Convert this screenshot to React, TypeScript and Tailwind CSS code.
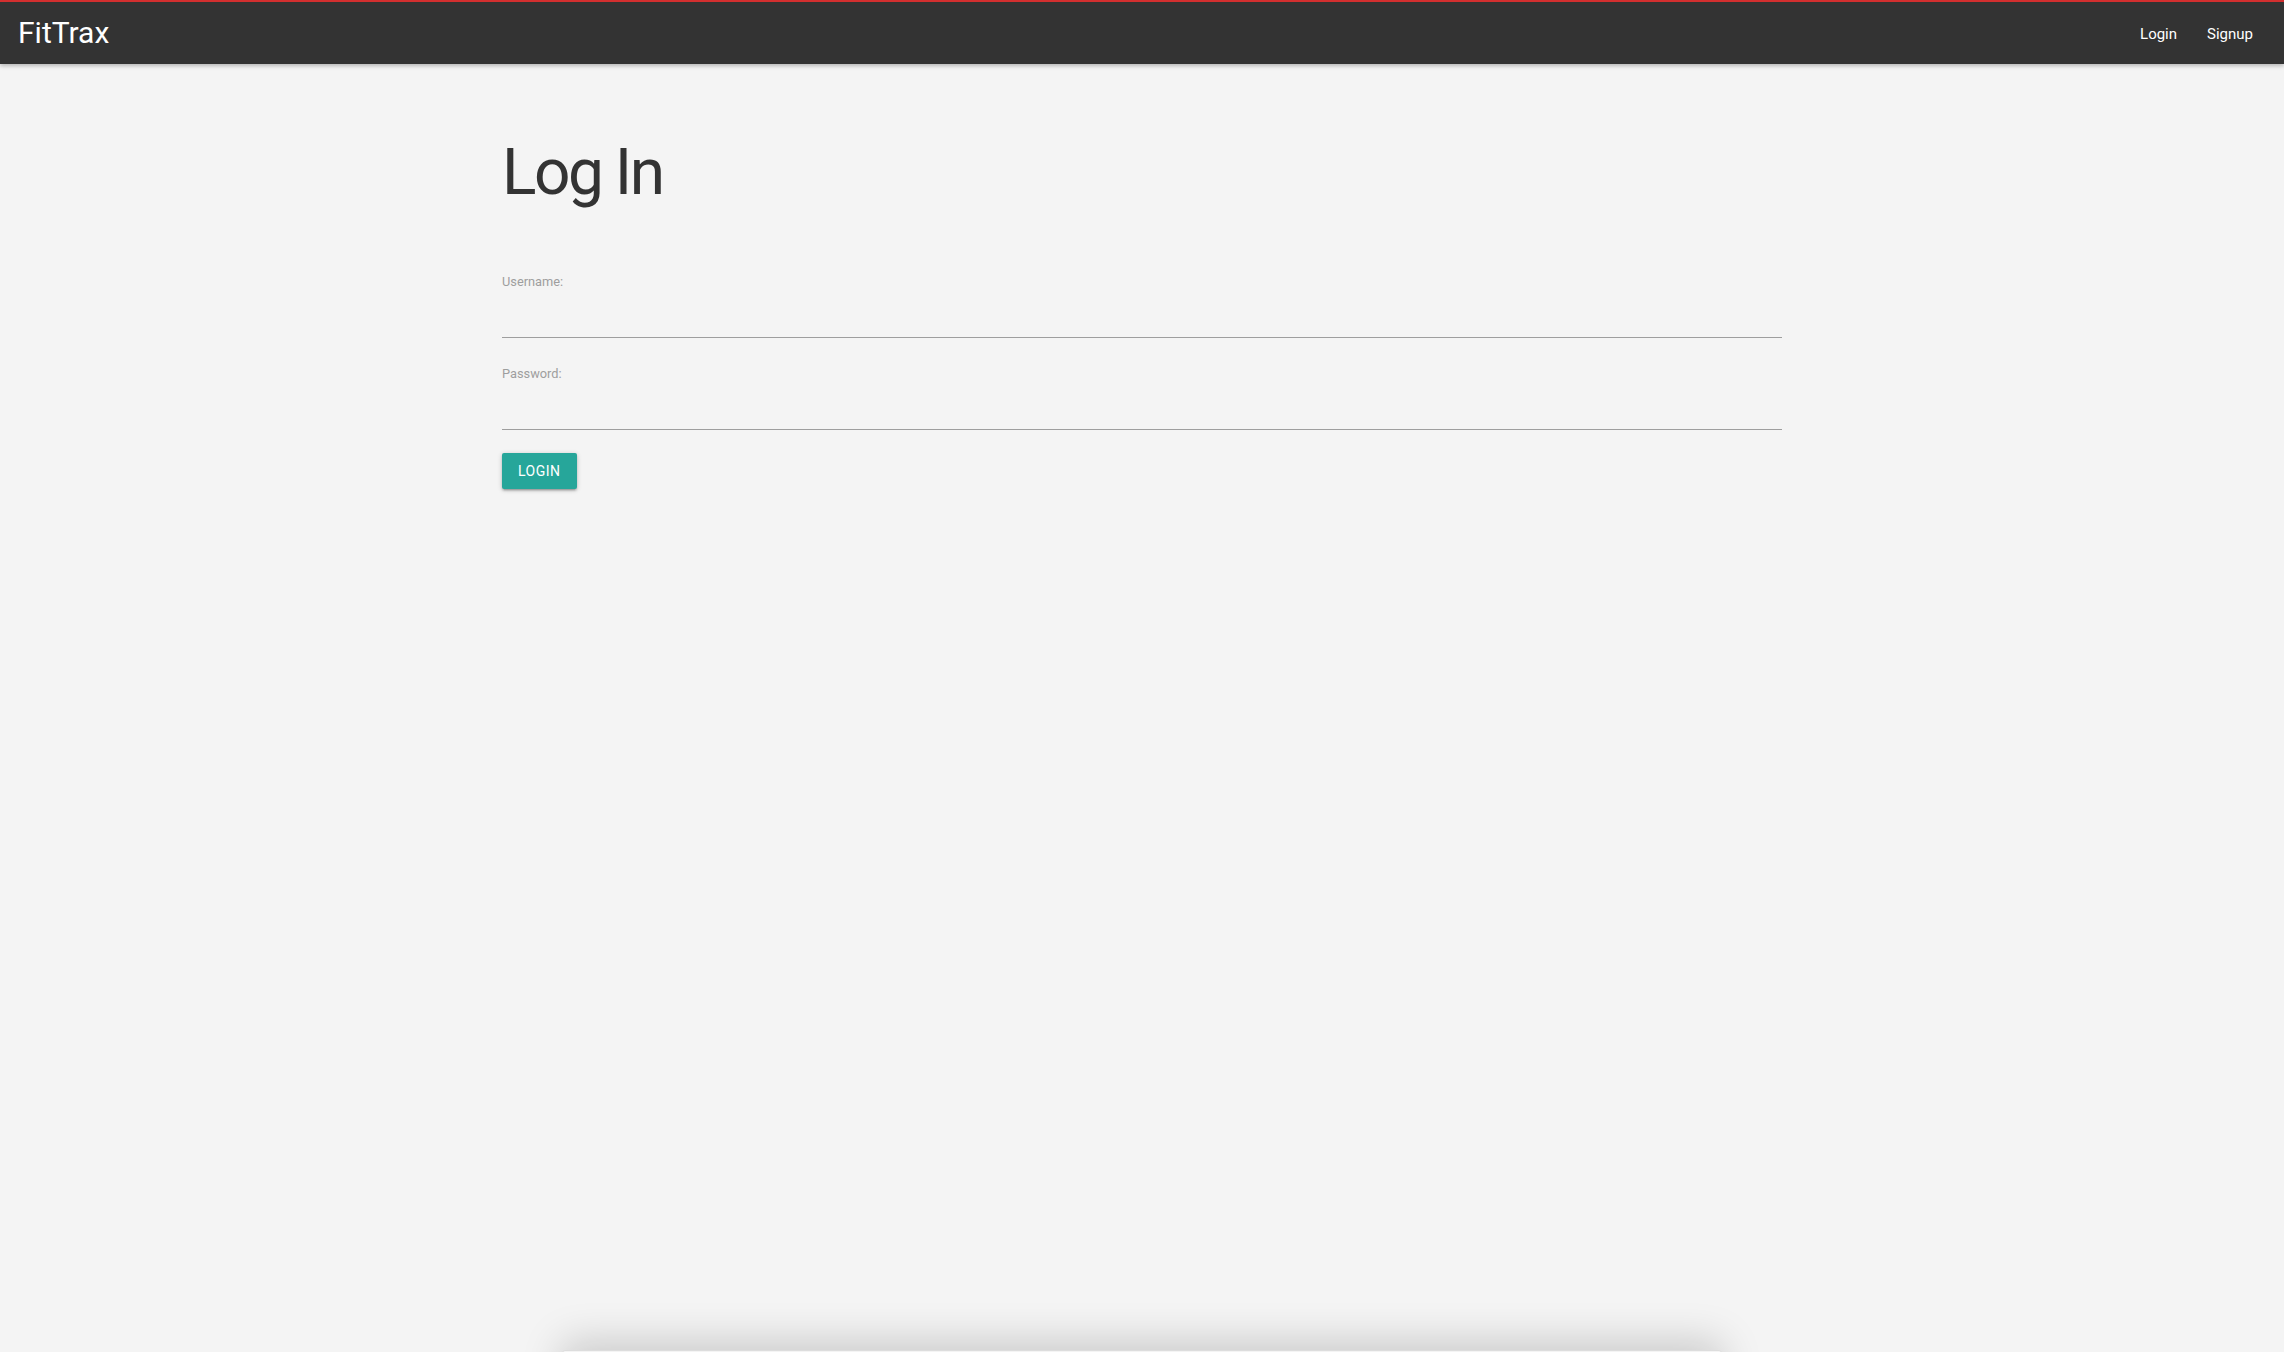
import React from "react";

export default function App() {
  return (
    <div
      className="min-h-screen bg-[#f4f4f4] overflow-hidden"
      style={{ fontFamily: "Roboto, 'Liberation Sans', sans-serif" }}
    >
      <nav className="h-16 bg-[#333333] border-t-2 border-[#d32f2f] flex items-center justify-between shadow-[0_2px_4px_rgba(0,0,0,0.25)] relative z-10">
        <a className="pl-[18px] text-white text-[30px] leading-[30px] font-normal">FitTrax</a>
        <ul className="flex items-center pr-[16px] pt-[2px]">
          <li>
            <a className="px-[15px] text-white text-[15px] leading-[15px]">Login</a>
          </li>
          <li>
            <a className="px-[15px] text-white text-[15px] leading-[15px]">Signup</a>
          </li>
        </ul>
      </nav>

      <main className="w-[1280px] mx-auto">
        <h1 className="mt-[74px] text-[64px] leading-[110%] font-normal text-[#333333] tracking-[-2.5px]">
          Log In
        </h1>
        <form className="mt-[66px] flex flex-col">
          <label className="block text-[12.8px] leading-[16px] text-[#9e9e9e]">Username:</label>
          <input
            type="text"
            className="h-[48px] w-full bg-transparent border-b border-[#9e9e9e] outline-none"
          />
          <label className="mt-[28px] block text-[12.8px] leading-[16px] text-[#9e9e9e]">Password:</label>
          <input
            type="password"
            className="h-[48px] w-full bg-transparent border-b border-[#9e9e9e] outline-none"
          />
          <div className="mt-[23px]">
            <button
              type="button"
              className="h-9 px-4 bg-[#26a69a] text-white text-[14px] tracking-[0.5px] uppercase rounded-[2px] shadow-[0_2px_2px_rgba(0,0,0,0.14),0_3px_1px_-2px_rgba(0,0,0,0.12),0_1px_5px_rgba(0,0,0,0.2)]"
            >
              Login
            </button>
          </div>
        </form>
      </main>

      <div className="w-[1160px] mx-auto mt-[861px] h-[300px] bg-[#f4f4f4] border border-[#dddddd] rounded-[3px] shadow-[0_-8px_40px_rgba(0,0,0,0.18)]" />
    </div>
  );
}
